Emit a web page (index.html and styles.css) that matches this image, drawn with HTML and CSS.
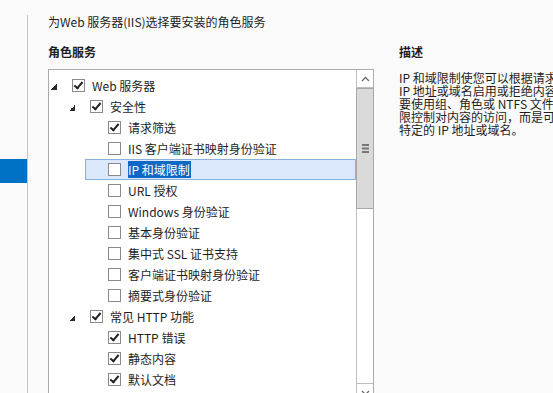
FILE: index.html
```html
<!DOCTYPE html>
<html lang="zh-CN">
<head>
  <meta charset="UTF-8">
  <title>选择角色服务</title>
  <link rel="stylesheet" href="styles.css">
</head>
<body>

  <div id="wizard">

    <!-- Left step list -->
    <div id="steps">
      <div class="step current"></div>
    </div>

    <!-- Main page -->
    <div id="page">
      <div class="title">为Web 服务器(IIS)选择要安装的角色服务</div>

      <div class="columns">

        <!-- Role services tree -->
        <div class="roles">
          <div class="heading">角色服务</div>
          <div class="tree">
            <div class="tree-list">
              <div class="row l1"><span class="exp open"></span><span class="cb on"></span>Web 服务器</div>
              <div class="row l2"><span class="exp open"></span><span class="cb on"></span>安全性</div>
              <div class="row l3"><span class="exp"></span><span class="cb on"></span>请求筛选</div>
              <div class="row l3"><span class="exp"></span><span class="cb"></span>IIS 客户端证书映射身份验证</div>
              <div class="row l3 selected"><span class="exp"></span><span class="cb"></span><span class="sel">IP 和域限制</span></div>
              <div class="row l3"><span class="exp"></span><span class="cb"></span>URL 授权</div>
              <div class="row l3"><span class="exp"></span><span class="cb"></span>Windows 身份验证</div>
              <div class="row l3"><span class="exp"></span><span class="cb"></span>基本身份验证</div>
              <div class="row l3"><span class="exp"></span><span class="cb"></span>集中式 SSL 证书支持</div>
              <div class="row l3"><span class="exp"></span><span class="cb"></span>客户端证书映射身份验证</div>
              <div class="row l3"><span class="exp"></span><span class="cb"></span>摘要式身份验证</div>
              <div class="row l2"><span class="exp open"></span><span class="cb on"></span>常见 HTTP 功能</div>
              <div class="row l3"><span class="exp"></span><span class="cb on"></span>HTTP 错误</div>
              <div class="row l3"><span class="exp"></span><span class="cb on"></span>静态内容</div>
              <div class="row l3"><span class="exp"></span><span class="cb on"></span>默认文档</div>
            </div>

            <div class="scrollbar">
              <div class="sb-btn up">
                <svg width="9" height="6" viewBox="0 0 9 6"><path d="M1 5L4.5 1.5L8 5" fill="none" stroke="#6a6a6a" stroke-width="1.3"/></svg>
              </div>
              <div class="sb-thumb">
                <svg width="7" height="9" viewBox="0 0 7 9"><rect y="0" width="7" height="2" fill="#777"/><rect y="3.5" width="7" height="2" fill="#777"/><rect y="7" width="7" height="2" fill="#777"/></svg>
              </div>
              <div class="sb-track"></div>
              <div class="sb-btn down">
                <svg width="9" height="6" viewBox="0 0 9 6"><path d="M1 1L4.5 4.5L8 1" fill="none" stroke="#6a6a6a" stroke-width="1.3"/></svg>
              </div>
            </div>
          </div>
        </div>

        <!-- Description -->
        <div class="desc">
          <div class="heading">描述</div>
          <div class="desc-text">
            <div>IP 和域限制使您可以根据请求的来源</div>
            <div>IP 地址或域名启用或拒绝内容访问。您不需</div>
            <div>要使用组、角色或 NTFS 文件系统权</div>
            <div>限控制对内容的访问，而是可以指定</div>
            <div>特定的 IP 地址或域名。</div>
          </div>
        </div>

      </div>
    </div>

  </div>

</body>
</html>
```

FILE: styles.css
```css
/* Page */
html, body {
  margin: 0;
  height: 393px;
  overflow: hidden;
}
body {
  background: #fafafa;
  color: #1e1e1e;
  font-family: "Noto Sans CJK SC", "Noto Sans", sans-serif;
  font-size: 12px;
}

#wizard {
  display: flex;
  height: 393px;
}

/* Left step list */
#steps {
  flex: none;
  width: 27px;
  margin-top: 15px;
  padding-top: 144px;
  border-right: 1px solid #c4c4c4;
}
.step {
  height: 24px;
}
.step.current {
  background: #0072c6;
}

/* Main page */
#page {
  flex: 1;
  min-width: 0;
  padding-left: 20px;
}
.title {
  margin-top: 14px;
  line-height: 16px;
  white-space: nowrap;
}
.columns {
  display: flex;
  gap: 25px;
  margin-top: 14px;
}
.heading {
  font-weight: bold;
  line-height: 16px;
  margin-bottom: 9px;
  white-space: nowrap;
}

/* Tree box */
.roles {
  flex: none;
  width: 326px;
}
.tree {
  display: flex;
  height: 340px;
  background: #fff;
  border: 1px solid #ababab;
}
.tree-list {
  flex: 1;
  padding-top: 5px;
}

.row {
  display: flex;
  align-items: center;
  height: 21px;
  box-sizing: border-box;
  padding-left: 2px;
  white-space: nowrap;
}
.row.l2 { margin-left: 18px; }
.row.l3 { margin-left: 36px; }
.row.selected {
  background: #dbe8fb;
  border: 1px solid #8cb0dc;
  padding-left: 1px;
}

/* Expander triangle */
.exp {
  flex: none;
  width: 6px;
  height: 6px;
  margin: 3px 15px 0 0;
}
.exp.open {
  background: linear-gradient(to bottom right, transparent 50%, #2b2b2b 50%);
}

/* Checkbox */
.cb {
  flex: none;
  width: 11px;
  height: 11px;
  margin-right: 7px;
  border: 1px solid #8a8a8a;
  background: #fff;
  position: relative;
}
.cb.on::after {
  content: "";
  position: absolute;
  left: 3px;
  top: 0px;
  width: 3px;
  height: 7px;
  border: solid #222;
  border-width: 0 2px 2px 0;
  transform: rotate(40deg);
}

.sel {
  background: #0f68c6;
  color: #fff;
  line-height: 17px;
  padding: 0 1px 0 0;
}

/* Scrollbar */
.scrollbar {
  flex: none;
  width: 16px;
  display: flex;
  flex-direction: column;
  border-left: 1px solid #bdbdbd;
}
.sb-btn {
  flex: none;
  height: 17px;
  display: flex;
  align-items: center;
  justify-content: center;
}
.sb-btn.up {
  border-bottom: 1px solid #bdbdbd;
}
.sb-btn.down {
  border-top: 1px solid #bdbdbd;
}
.sb-thumb {
  flex: none;
  height: 119px;
  background: #dadada;
  border: 1px solid #a8a8a8;
  margin: 0 -1px;
  display: flex;
  align-items: center;
  justify-content: center;
}
.sb-track {
  flex: none;
  height: 174px;
}

/* Description */
.desc {
  flex: none;
  width: 154px;
  overflow: hidden;
}
.desc-text {
  margin-top: 11px;
  line-height: 13px;
  white-space: nowrap;
}
```
